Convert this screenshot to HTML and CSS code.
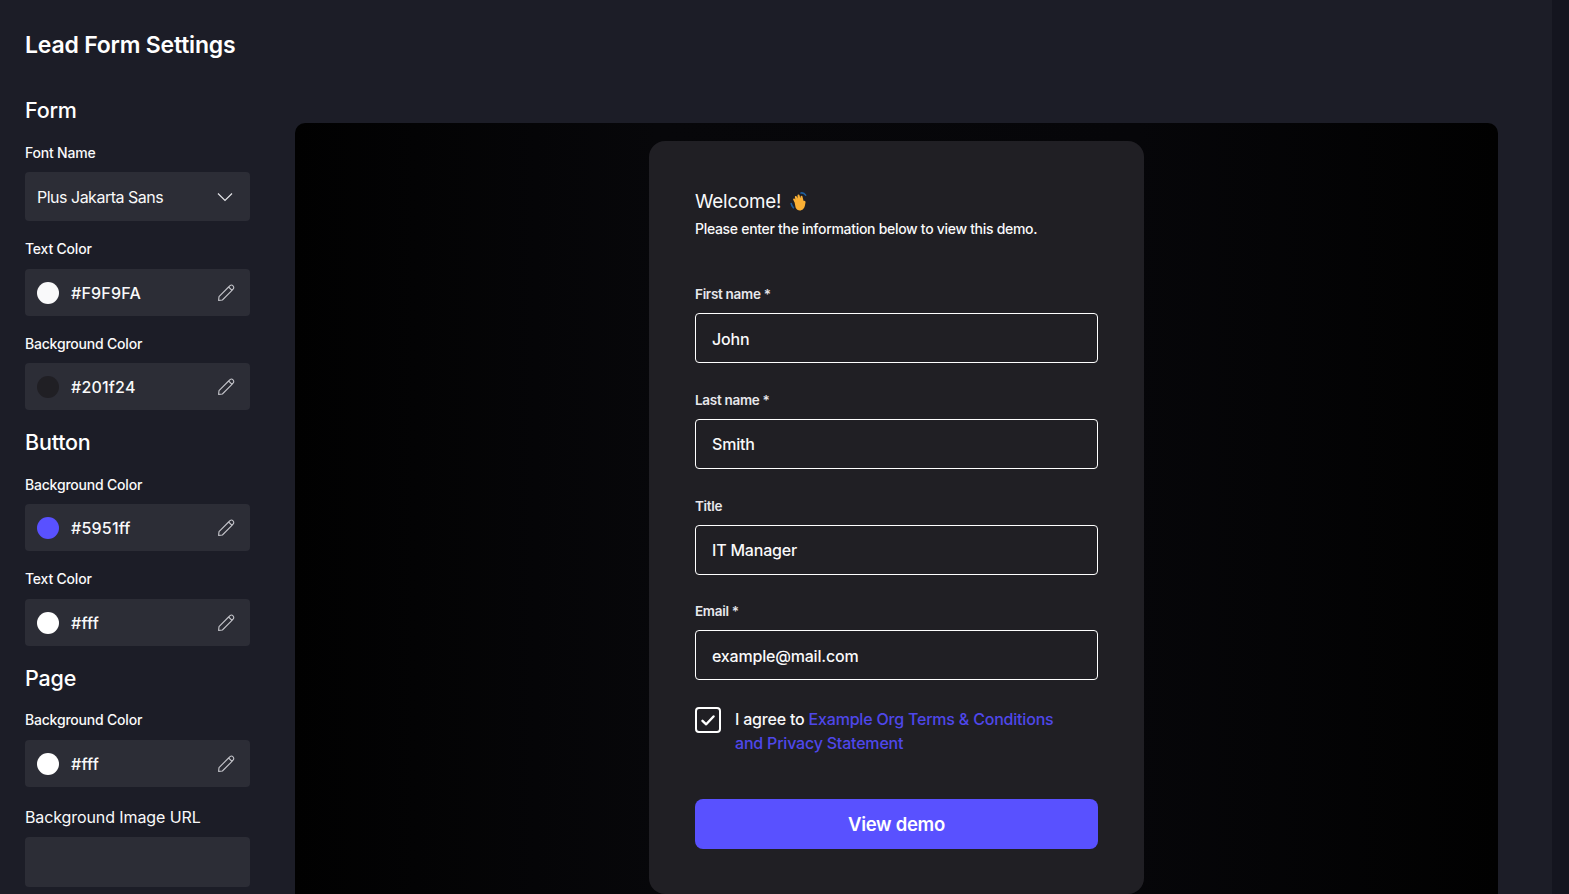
FILE: index.html
```html
<!DOCTYPE html>
<html lang="en">
<head>
    <meta charset="UTF-8">
    <meta name="viewport" content="width=device-width, initial-scale=1.0">
    <title>Lead Form Settings</title>
    <link rel="stylesheet" href="styles.css">
</head>
<body>
    <svg class="icon-defs" width="0" height="0">
        <symbol id="pencil" viewBox="0 0 18 18">
            <path d="M1.6 16.4 L2 12.6 L11.6 3 L15 6.4 L5.4 16 Z M11.6 3 L13 1.7 C13.9 0.9 15.1 0.9 16 1.8 C16.9 2.7 16.9 3.9 16.2 4.9 L15 6.4" fill="none" stroke="currentColor" stroke-width="1.1" stroke-linejoin="round"/>
        </symbol>
    </svg>

    <aside class="sidebar">
        <h1 class="page-title">Lead Form Settings</h1>

        <h2 class="section-title section-first">Form</h2>
        <div class="group">
            <label class="group-label">Font Name</label>
            <div class="select-box">
                <span>Plus Jakarta Sans</span>
                <svg class="chevron" width="16" height="10" viewBox="0 0 16 10"><path d="M1 1.5 L8 8.5 L15 1.5" fill="none" stroke="currentColor" stroke-width="1.2"/></svg>
            </div>
        </div>
        <div class="group">
            <label class="group-label">Text Color</label>
            <div class="color-box">
                <span class="swatch swatch-light"></span>
                <span class="color-value">#F9F9FA</span>
                <svg class="pencil" width="18" height="18"><use href="#pencil"/></svg>
            </div>
        </div>
        <div class="group">
            <label class="group-label">Background Color</label>
            <div class="color-box">
                <span class="swatch swatch-dark"></span>
                <span class="color-value">#201f24</span>
                <svg class="pencil" width="18" height="18"><use href="#pencil"/></svg>
            </div>
        </div>

        <h2 class="section-title">Button</h2>
        <div class="group">
            <label class="group-label">Background Color</label>
            <div class="color-box">
                <span class="swatch swatch-brand"></span>
                <span class="color-value">#5951ff</span>
                <svg class="pencil" width="18" height="18"><use href="#pencil"/></svg>
            </div>
        </div>
        <div class="group">
            <label class="group-label">Text Color</label>
            <div class="color-box">
                <span class="swatch swatch-white"></span>
                <span class="color-value">#fff</span>
                <svg class="pencil" width="18" height="18"><use href="#pencil"/></svg>
            </div>
        </div>

        <h2 class="section-title">Page</h2>
        <div class="group">
            <label class="group-label">Background Color</label>
            <div class="color-box">
                <span class="swatch swatch-white"></span>
                <span class="color-value">#fff</span>
                <svg class="pencil" width="18" height="18"><use href="#pencil"/></svg>
            </div>
        </div>
        <div class="group group-url">
            <label class="group-label group-label-large">Background Image URL</label>
            <div class="url-box"></div>
        </div>
    </aside>

    <main class="preview">
        <div class="preview-panel">
            <form class="lead-card">
                <h3 class="welcome">Welcome!
                    <svg class="wave" width="20" height="20" viewBox="0 0 20 20">
                        <path d="M1.2 11.5 C1.5 13.2 2.2 14.6 3.4 15.8 M11 1 C12.8 .7 14.6 1.6 15.6 3.2" fill="none" stroke="#1f5f9e" stroke-width="1.6" stroke-linecap="round"/>
                        <path d="M4.6 10.6 L3.2 7.8 C2.7 6.6 4.2 5.9 4.9 6.9 L5.4 7.6 L4.9 5.4 C4.6 4.1 6.3 3.6 6.9 4.8 L7.6 6.4 L7.5 3.6 C7.5 2.3 9.3 2.2 9.6 3.5 L10.3 6.2 L10.6 4.4 C10.9 3.2 12.5 3.5 12.5 4.7 L13.6 8.9 C14.8 8.4 15.8 9.4 15.5 10.4 C15 12 15.2 15 13.2 17 C10.6 19.6 6.8 18.6 5.6 15.4 Z" fill="#fbb034"/>
                    </svg>
                </h3>
                <p class="intro">Please enter the information below to view this demo.</p>

                <div class="lead-field lead-field-first">
                    <label class="lead-label">First name *</label>
                    <input class="lead-input" type="text" value="John">
                </div>
                <div class="lead-field">
                    <label class="lead-label">Last name *</label>
                    <input class="lead-input" type="text" value="Smith">
                </div>
                <div class="lead-field">
                    <label class="lead-label">Title</label>
                    <input class="lead-input" type="text" value="IT Manager">
                </div>
                <div class="lead-field">
                    <label class="lead-label">Email *</label>
                    <input class="lead-input" type="text" value="example@mail.com">
                </div>

                <div class="agree">
                    <span class="checkbox">
                        <svg width="14" height="11" viewBox="0 0 14 11"><path d="M1.5 5.8 L5.2 9.3 L12.5 1.5" fill="none" stroke="#fff" stroke-width="2.4" stroke-linecap="round" stroke-linejoin="round"/></svg>
                    </span>
                    <p class="agree-text">I agree to <a class="agree-link">Example Org Terms &amp; Conditions and Privacy Statement</a></p>
                </div>

                <button class="submit" type="button">View demo</button>
            </form>
        </div>
    </main>

    <div class="scroll-strip"></div>
</body>
</html>
```

FILE: styles.css
```css
* {
    box-sizing: border-box;
}
html, body {
    height: 100%;
    overflow: hidden;
}
body {
    margin: 0;
    display: flex;
    background: #1c1d27;
    color: #f9f9fa;
    font-family: Inter, "Noto Sans", sans-serif;
}
.icon-defs {
    position: absolute;
}

/* left settings column */
.sidebar {
    width: 295px;
    flex-shrink: 0;
    padding: 30px 45px 0 25px;
}
.page-title {
    margin: 0;
    font-size: 23px;
    line-height: 30px;
    font-weight: 600;
    letter-spacing: -0.2px;
    color: #fff;
}
.section-title {
    margin: 0 0 17.5px;
    font-size: 21.5px;
    line-height: 29px;
    font-weight: 500;
    letter-spacing: -0.2px;
    color: #fff;
}
.section-first {
    margin-top: 36px;
}
.group {
    margin-bottom: 18px;
}
.group-url {
    margin-top: 20px;
}
.group-label {
    display: block;
    margin-bottom: 9.5px;
    font-size: 14px;
    line-height: 20px;
    font-weight: 500;
    letter-spacing: -0.2px;
}
.group-label-large {
    font-size: 16px;
    font-weight: 400;
    letter-spacing: -0.1px;
    margin-bottom: 10px;
}
.select-box, .color-box {
    display: flex;
    align-items: center;
    background: #2c2d36;
    border-radius: 4px;
    padding: 1px 15px 0 12px;
    font-size: 16px;
}
.select-box {
    height: 49px;
    justify-content: space-between;
    padding-right: 17px;
    letter-spacing: -0.5px;
}
.color-box {
    height: 47px;
    letter-spacing: 0.2px;
}
.url-box {
    height: 50px;
    background: #2c2d36;
    border-radius: 4px;
}
.swatch {
    width: 22px;
    height: 22px;
    border-radius: 50%;
    margin-right: 12px;
}
.swatch-light { background: #f9f9fa; }
.swatch-dark { background: #201f24; }
.swatch-brand { background: #5951ff; }
.swatch-white { background: #fff; }
.color-value {
    flex: 1;
    font-weight: 500;
}
.chevron {
    color: #e4e4e8;
}
.pencil {
    color: #c4c4ca;
}

/* preview */
.preview {
    width: 1257px;
    flex-shrink: 0;
    padding-top: 123px;
}
.preview-panel {
    width: 1203px;
    height: 800px;
    display: flex;
    justify-content: center;
    padding-top: 18px;
    background: linear-gradient(90deg, #010101, #07070a 30%, #060609 70%, #010101);
    border-radius: 10px 10px 0 0;
}
.lead-card {
    width: 495px;
    height: 753px;
    padding: 47px 46px 0;
    background: #201f24;
    border-radius: 16px;
}
.welcome {
    margin: 0;
    display: flex;
    align-items: center;
    gap: 9px;
    font-size: 18.8px;
    line-height: 28px;
    font-weight: 400;
    letter-spacing: -0.2px;
}
.intro {
    margin: 3px 0 0;
    font-size: 14px;
    line-height: 20px;
    font-weight: 500;
    letter-spacing: -0.3px;
}
.lead-field {
    margin-top: 26.7px;
}
.lead-field-first {
    margin-top: 45.3px;
}
.lead-label {
    display: block;
    margin-bottom: 9px;
    font-size: 13.5px;
    line-height: 20px;
    font-weight: 600;
    letter-spacing: -0.3px;
    color: #e8e8ec;
}
.lead-input {
    display: block;
    width: 100%;
    height: 50px;
    padding: 1px 16px 0;
    background: transparent;
    border: 1px solid #fff;
    border-radius: 4px;
    color: #f9f9fa;
    font-family: inherit;
    font-size: 16px;
    font-weight: 500;
    letter-spacing: -0.2px;
    outline: none;
}
.agree {
    display: flex;
    gap: 14px;
    margin-top: 27px;
}
.checkbox {
    width: 26px;
    height: 26px;
    flex-shrink: 0;
    display: flex;
    align-items: center;
    justify-content: center;
    border: 2px solid #fff;
    border-radius: 4px;
}
.agree-text {
    margin: 0;
    font-size: 16px;
    line-height: 24px;
    letter-spacing: -0.2px;
    font-weight: 500;
    max-width: 340px;
}
.agree-link {
    color: #4f47ea;
    font-weight: 500;
}
.submit {
    display: block;
    width: 100%;
    height: 50px;
    margin-top: 44px;
    background: #5951ff;
    border: 0;
    border-radius: 8px;
    color: #fff;
    font-family: inherit;
    font-size: 18.5px;
    font-weight: 600;
    letter-spacing: -0.3px;
}

.scroll-strip {
    flex: 1;
    background: #14151f;
}
```
